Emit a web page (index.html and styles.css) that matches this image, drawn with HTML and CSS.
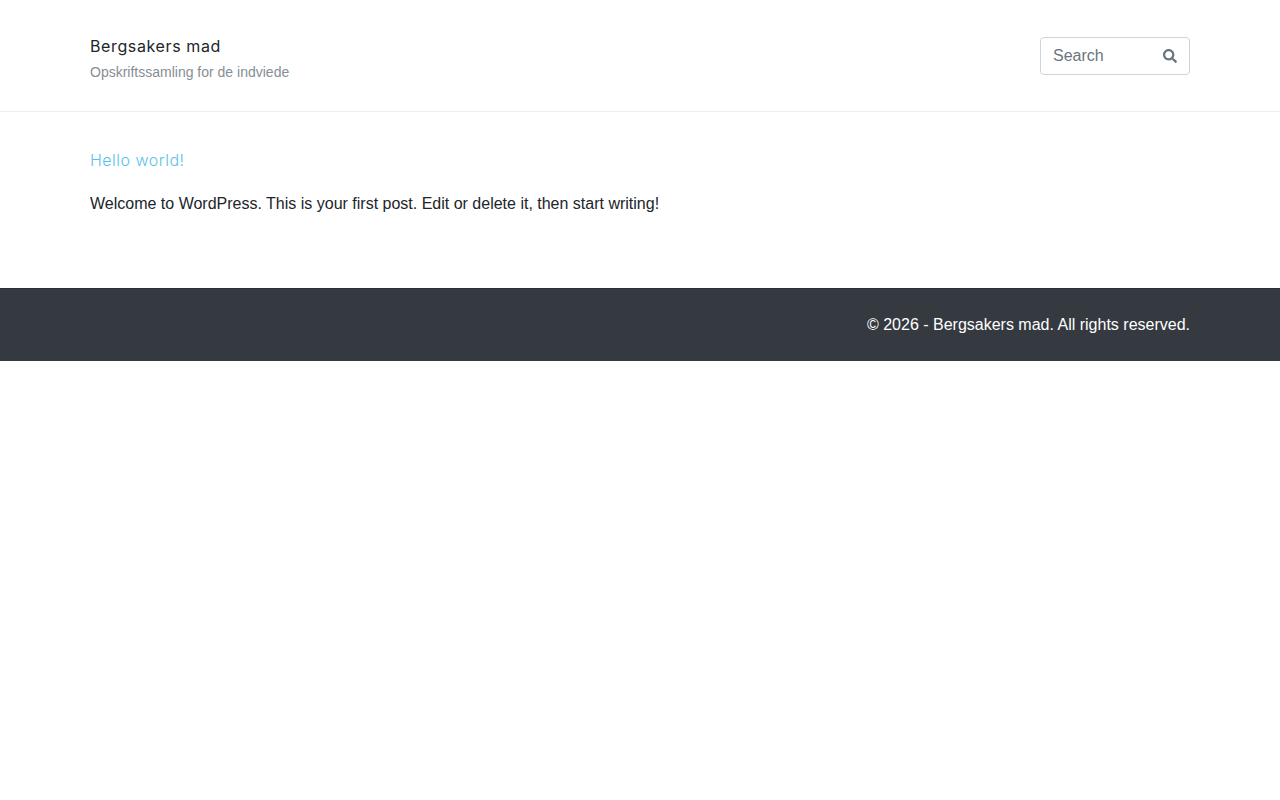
FILE: index.html
```html
<!DOCTYPE html>
<html lang="en">
<head>
<meta charset="utf-8">
<title>Bergsakers mad</title>
<link rel="stylesheet" href="styles.css">
</head>
<body>
<header class="site-header">
  <div class="container header-row">
    <div class="branding">
      <a class="site-title" href="#">Bergsakers mad</a>
      <p class="site-tagline">Opskriftssamling for de indviede</p>
    </div>
    <form class="search">
      <input class="search-input" type="text" placeholder="Search">
      <svg class="search-icon" viewBox="0 0 512 512" aria-hidden="true"><path d="M505 442.7L405.3 343c-4.5-4.5-10.6-7-17-7H372c27.6-35.3 44-79.7 44-128C416 93.1 322.9 0 208 0S0 93.1 0 208s93.1 208 208 208c48.3 0 92.7-16.4 128-44v16.3c0 6.4 2.5 12.5 7 17l99.7 99.7c9.4 9.4 24.6 9.4 33.9 0l28.3-28.3c9.4-9.4 9.4-24.6.1-34zM208 336c-70.7 0-128-57.2-128-128 0-70.7 57.2-128 128-128 70.7 0 128 57.2 128 128 0 70.7-57.2 128-128 128z"/></svg>
    </form>
  </div>
</header>
<main class="container content">
  <h2 class="post-title"><a href="#">Hello world!</a></h2>
  <p class="post-text">Welcome to WordPress. This is your first post. Edit or delete it, then start writing!</p>
</main>
<footer class="site-footer">
  <div class="container footer-row">© 2026 - Bergsakers mad. All rights reserved.</div>
</footer>
</body>
</html>
```
FILE: styles.css
```css
* { box-sizing: border-box; }
body {
  margin: 0;
  background: #fff;
  color: #212529;
  font-family: "Liberation Sans", Arial, sans-serif;
  font-size: 16px;
  line-height: 24px;
}
a { text-decoration: none; }
.container { width: 1100px; margin: 0 auto; }
.site-header { height: 112px; border-bottom: 1px solid #eeeeee; }
.header-row { display: flex; justify-content: space-between; align-items: center; height: 111px; }
.branding { display: flex; flex-direction: column; gap: 5px; padding-top: 7px; }
.site-title {
  font-family: Inter, sans-serif;
  font-size: 16px;
  line-height: 22px;
  letter-spacing: 0.62px;
  color: #212529;
}
.site-tagline { margin: 0; font-size: 14px; line-height: 21px; color: #868e96; }
.search { position: relative; width: 150px; height: 38px; }
.search-input {
  display: block;
  width: 100%;
  height: 100%;
  padding: 6px 12px;
  border: 1px solid #ced4da;
  border-radius: 4px;
  font-family: inherit;
  font-size: 16px;
  color: #495057;
  background: #fff;
}
.search-input::placeholder { color: #6c757d; opacity: 1; }
.search-icon { position: absolute; top: 12px; right: 13px; width: 14px; height: 14px; fill: #6c757d; }
.content { padding-top: 36px; padding-bottom: 56px; }
.post-title { margin: 0 0 20px; font-size: 16px; line-height: 24px; font-weight: 300; font-family: Inter, sans-serif; letter-spacing: 0.5px; }
.post-title a { color: #5bbfea; }
.post-text { margin: 0 0 16px; }
.site-footer { height: 73px; background: #343a40; border-top: 1px solid #2b3035; color: #fff; }
.footer-row { padding-top: 24px; text-align: right; }
```
